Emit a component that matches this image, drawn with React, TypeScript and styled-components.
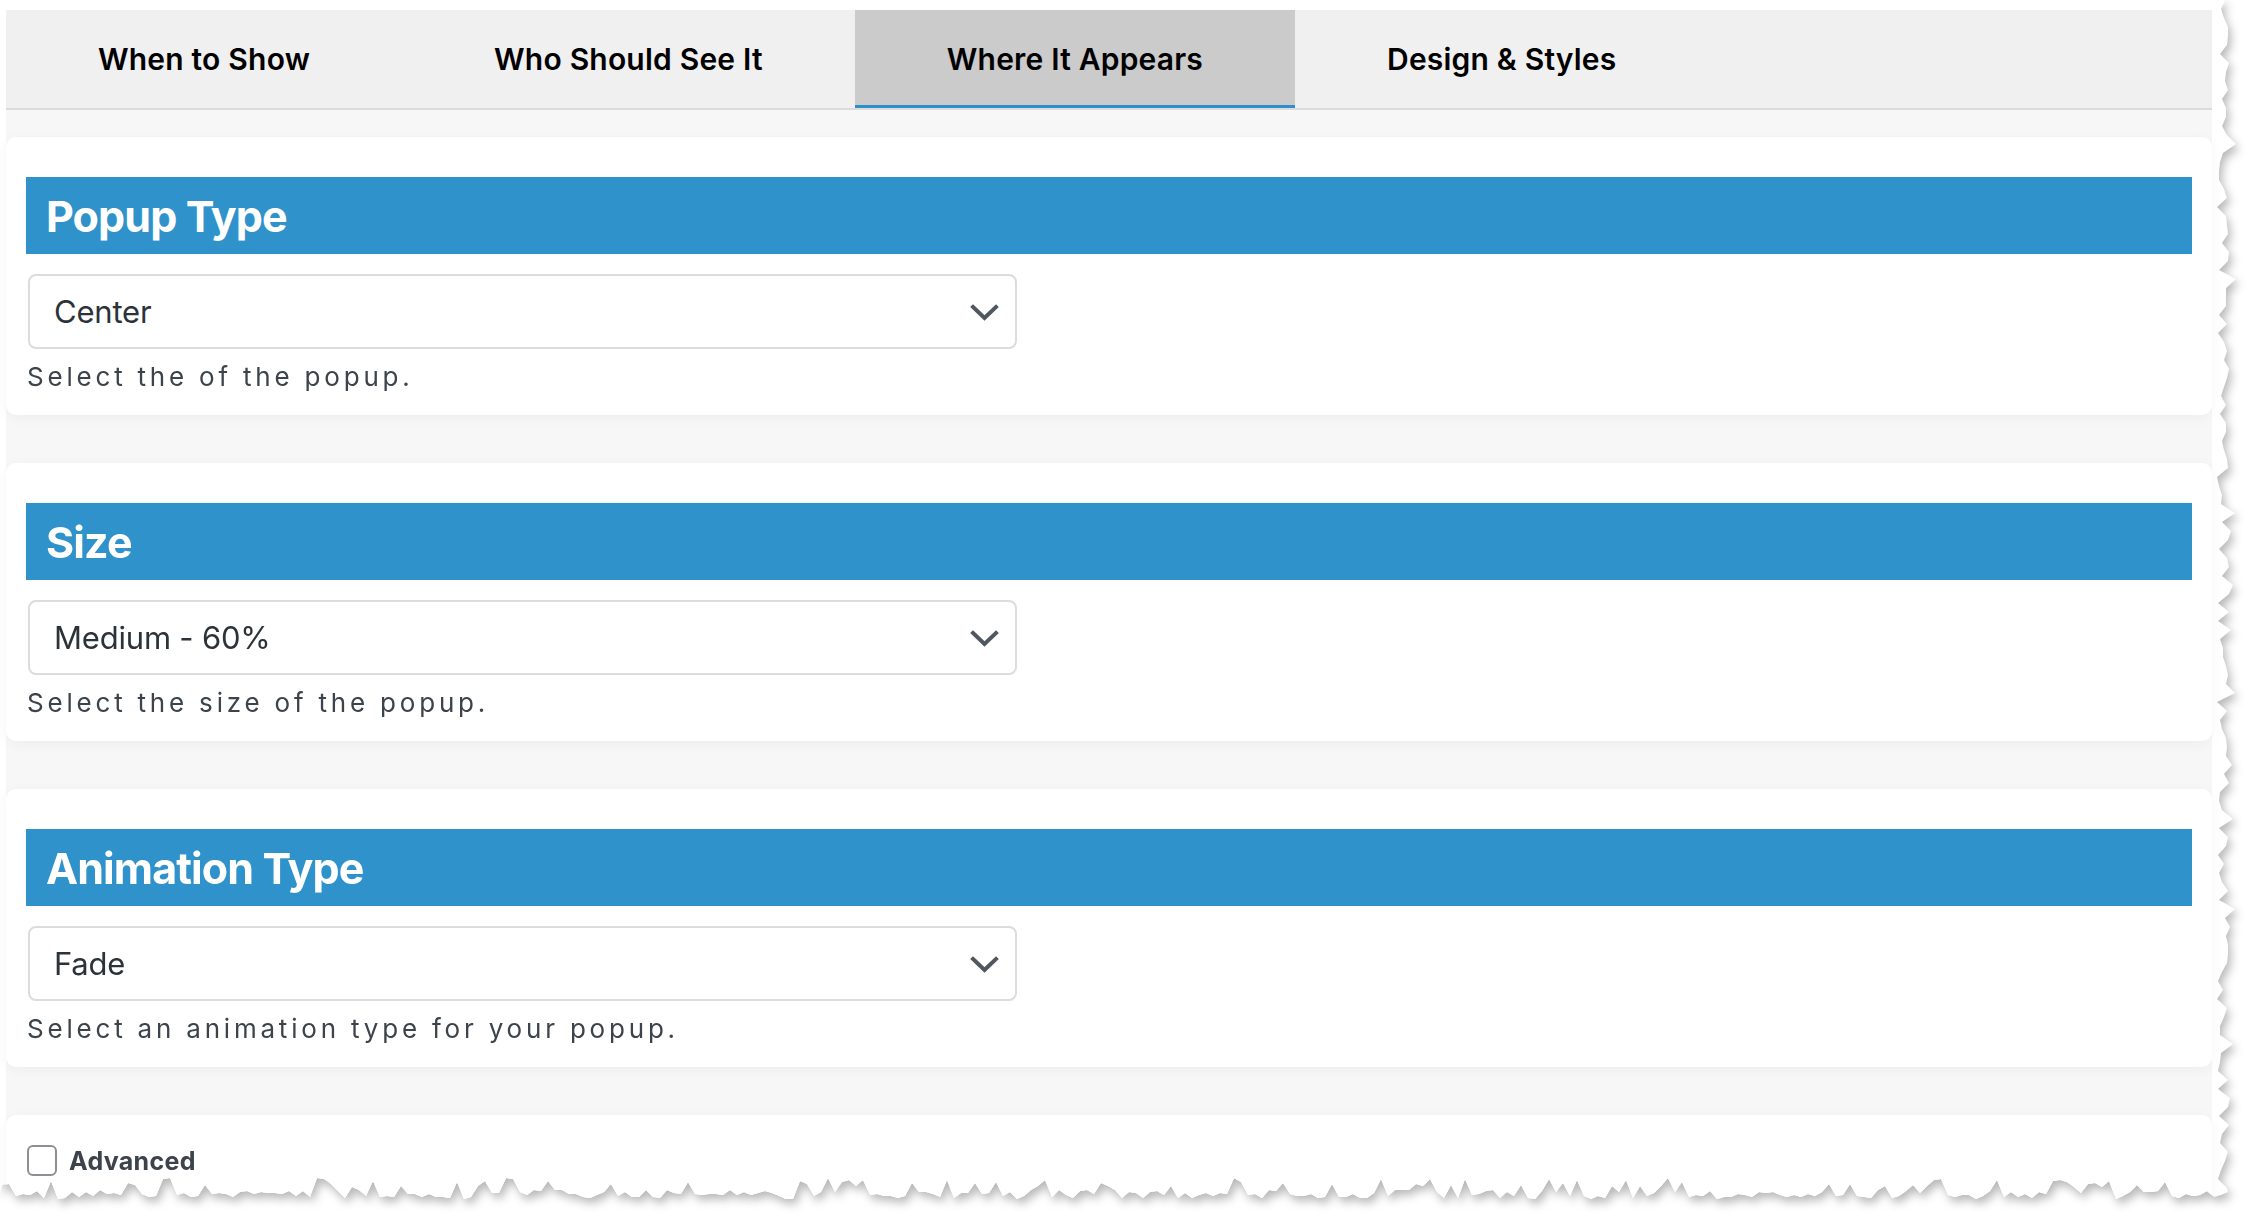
import React from "react";
import styled, { createGlobalStyle } from "styled-components";

const GlobalStyle = createGlobalStyle`
  html, body { margin: 0; padding: 0; background: #ffffff; }
  body { font-family: Inter, "Liberation Sans", Arial, sans-serif; overflow: hidden; }
  * { box-sizing: border-box; }
`;

// deterministic jagged edge for the torn-paper look
function makeTorn(): string {
  let s = 7;
  const r = () => {
    s = (s * 16807) % 2147483647;
    return (s % 1000) / 1000;
  };
  const pts: string[] = ["0px 0px"];
  for (let y = 0; y <= 1190; y += 9) {
    const x = 2217 + Math.round(r() * 13 + (r() > 0.85 ? 7 : 0));
    pts.push(`${x}px ${y}px`);
  }
  for (let x = 2228; x >= 0; x -= 7) {
    const spike = r() > 0.78 ? -12 : 0;
    const y = 1190 + Math.round(r() * 9) + spike;
    pts.push(`${x}px ${y}px`);
  }
  pts.push("0px 1194px");
  return `polygon(${pts.join(", ")})`;
}
const TORN = makeTorn();

const ShadowWrap = styled.div`
  width: 2256px;
  height: 1228px;
  filter: drop-shadow(3px 5px 5px rgba(0, 0, 0, 0.28));
`;

const Sheet = styled.div`
  width: 2244px;
  height: 1212px;
  background: #ffffff;
  clip-path: ${TORN};
  padding: 10px 0 0 6px;
`;

const Frame = styled.div`
  width: 2206px;
  height: 1202px;
  display: flex;
  flex-direction: column;
  background: linear-gradient(#fcfcfc, #f7f7f7 60px);
`;

const TabBar = styled.div`
  display: flex;
  height: 100px;
  background: #f0f0f0;
  border-bottom: 2px solid #dcdcdc;
  flex-shrink: 0;
`;

const Tab = styled.div<{ $active?: boolean }>`
  display: flex;
  align-items: center;
  justify-content: center;
  padding: 3px 92px 0;
  height: 98px;
  font-size: 30px;
  font-weight: 600;
  letter-spacing: 0.2px;
  color: #000000;
  background: ${(p) => (p.$active ? "#cbcbcb" : "transparent")};
  border-bottom: 3px solid ${(p) => (p.$active ? "#2f8fca" : "transparent")};
`;

const Cards = styled.div`
  display: flex;
  flex-direction: column;
  gap: 48px;
  padding-top: 27px;
`;

const Card = styled.section<{ $plain?: boolean }>`
  background: #ffffff;
  border-radius: 10px;
  box-shadow: 0 3px 14px rgba(0, 0, 0, 0.045);
  padding: ${(p) => (p.$plain ? "30px 20px 60px" : "40px 20px 20px")};
`;

const Heading = styled.h2`
  margin: 0;
  height: 77px;
  display: flex;
  align-items: center;
  padding: 0 20px 0;
  background: #2f92ca;
  color: #ffffff;
  font-size: 43px;
  font-weight: 700;
  letter-spacing: -0.9px;
`;

const SelectBox = styled.div`
  margin: 20px 0 0 2px;
  width: 989px;
  height: 75px;
  border: 2px solid #dcdcdc;
  border-radius: 8px;
  display: flex;
  align-items: center;
  justify-content: space-between;
  padding: 0 16px 0 24px;
  background: #ffffff;
`;

const SelectValue = styled.span`
  font-size: 31px;
  color: #2c3338;
  letter-spacing: -0.2px;
`;

const Chevron = styled.svg`
  width: 29px;
  height: 17px;
  margin-top: 1px;
`;

const Help = styled.p`
  margin: 10px 0 0 1px;
  font-size: 26px;
  line-height: 36px;
  letter-spacing: 3.8px;
  color: #3c434a;
`;

const CheckRow = styled.label`
  display: flex;
  align-items: center;
  gap: 12px;
  margin-left: 1px;
`;

const Box = styled.span`
  width: 30px;
  height: 31px;
  border: 2px solid #8c8f94;
  border-radius: 6px;
  background: #ffffff;
`;

const CheckLabel = styled.span`
  font-size: 25px;
  font-weight: 700;
  color: #3c434a;
  letter-spacing: 0.3px;
`;

function DownChevron() {
  return (
    <Chevron viewBox="0 0 29 17" fill="none">
      <polyline
        points="3,3 14.5,14 26,3"
        stroke="#50575e"
        strokeWidth="4"
        strokeLinecap="square"
      />
    </Chevron>
  );
}

const sections = [
  { title: "Popup Type", value: "Center", help: "Select the of the popup." },
  { title: "Size", value: "Medium - 60%", help: "Select the size of the popup." },
  { title: "Animation Type", value: "Fade", help: "Select an animation type for your popup." },
];

const tabs = ["When to Show", "Who Should See It", "Where It Appears", "Design & Styles"];

export default function App() {
  return (
    <>
      <GlobalStyle />
      <ShadowWrap>
        <Sheet>
          <Frame>
            <TabBar>
              {tabs.map((t) => (
                <Tab key={t} $active={t === "Where It Appears"}>
                  {t}
                </Tab>
              ))}
            </TabBar>
            <Cards>
              {sections.map((s) => (
                <Card key={s.title}>
                  <Heading>{s.title}</Heading>
                  <SelectBox>
                    <SelectValue>{s.value}</SelectValue>
                    <DownChevron />
                  </SelectBox>
                  <Help>{s.help}</Help>
                </Card>
              ))}
              <Card $plain>
                <CheckRow>
                  <Box />
                  <CheckLabel>Advanced</CheckLabel>
                </CheckRow>
              </Card>
            </Cards>
          </Frame>
        </Sheet>
      </ShadowWrap>
    </>
  );
}
